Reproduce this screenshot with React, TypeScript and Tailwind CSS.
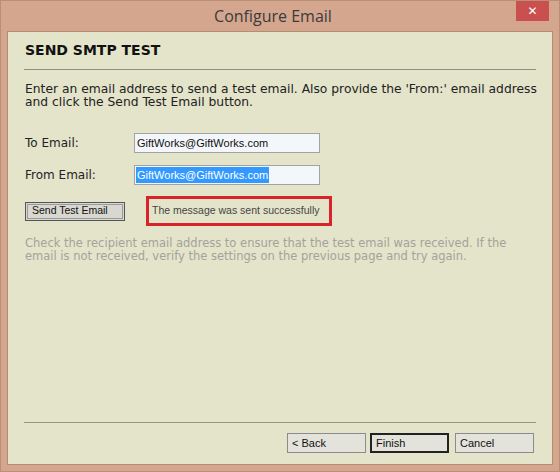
import React from 'react';

// Ventana de diálogo "Configure Email" estilo Windows 8 con asistente de prueba SMTP
const verdana = { fontFamily: '"DejaVu Sans", Verdana, sans-serif' };
const tahoma = { fontFamily: '"Liberation Sans", Tahoma, Arial, sans-serif' };

function WizButton({ label, focused = false }: { label: string; focused?: boolean }) {
  return (
    <button
      className={
        'w-[79px] h-[20px] bg-[#e3e3dc] text-left pl-[4px] text-[11px] text-[#111] leading-none ' +
        (focused ? 'border-2 border-[#222]' : 'border border-[#8c8c8c]')
      }
      style={tahoma}
    >
      {label}
    </button>
  );
}

export default function App() {
  return (
    <div className="w-[560px] h-[472px] bg-[#d4a68e] border border-[#b98f77] flex flex-col overflow-hidden">
      {/* Barra de título */}
      <div className="relative h-[30px] shrink-0 flex items-center justify-center pr-[14px]">
        <span className="text-[16px] text-[#3b3b3b]" style={{ fontFamily: '"Open Sans", "Noto Sans", sans-serif' }}>
          Configure Email
        </span>
        <div className="absolute right-[10px] top-0 w-[33px] h-[20px] bg-[#c9504f] flex items-center justify-center">
          <span className="text-white text-[12px] font-bold leading-none" style={{ fontFamily: '"DejaVu Sans", sans-serif' }}>✕</span>
        </div>
      </div>

      {/* Área de contenido */}
      <div className="flex-1 mx-[6px] mb-[6px] bg-[#e4e4ca] border border-[#b38c74] flex flex-col px-[16px]" style={verdana}>
        <h1 className="pt-[10px] pl-[1px] text-[14px] font-bold text-[#111] leading-[16px]">SEND SMTP TEST</h1>
        <div className="mt-[11px] h-px bg-[#8e8e86]" />

        <p className="mt-[13px] pl-[1px] text-[12.3px] leading-[13px] text-[#222] whitespace-nowrap">
          Enter an email address to send a test email. Also provide the 'From:' email address
          <br />
          and click the Send Test Email button.
        </p>

        <div className="mt-[24px] flex flex-col gap-[12px] pl-[1px]">
          <div className="flex items-center">
            <span className="w-[109px] text-[12px] text-[#222]">To Email:</span>
            <div
              className="w-[186px] h-[20px] bg-[#f3f6fb] border border-[#a3a3a3] flex items-center pl-[2px] text-[11px] text-[#111]"
              style={tahoma}
            >
              GiftWorks@GiftWorks.com
            </div>
          </div>
          <div className="flex items-center">
            <span className="w-[109px] text-[12px] text-[#222]">From Email:</span>
            <div
              className="w-[186px] h-[20px] bg-[#f3f6fb] border border-[#a3a3a3] flex items-center pl-[1px] text-[11px]"
              style={tahoma}
            >
              <span className="bg-[#3399ff] text-white px-[1px]">GiftWorks@GiftWorks.com</span>
            </div>
          </div>
        </div>

        <div className="mt-[11px] flex items-center pl-[1px]">
          <div className="w-[100px] h-[19px] border border-[#555] bg-[#d8d8d0] p-px">
            <div
              className="w-full h-full border border-[#9a9a9a] flex items-center pl-[4px] text-[10.5px] text-[#111]"
              style={tahoma}
            >
              Send Test Email
            </div>
          </div>
          <div
            className="ml-[21px] w-[186px] h-[30px] border-[3px] border-[#d9232b] flex items-center pl-[3px] text-[10.5px] text-[#444]"
            style={tahoma}
          >
            The message was sent successfully
          </div>
        </div>

        <p className="mt-[11px] pl-[1px] text-[11.5px] leading-[13px] text-[#a3a39a] whitespace-nowrap">
          Check the recipient email address to ensure that the test email was received. If the
          <br />
          email is not received, verify the settings on the previous page and try again.
        </p>

        <div className="flex-1" />
        <div className="h-px bg-[#8e9a86]" />
        <div className="mt-[10px] mb-[11px] flex justify-end pr-[2px]">
          <WizButton label="< Back" />
          <div className="w-[4px]" />
          <WizButton label="Finish" focused />
          <div className="w-[6px]" />
          <WizButton label="Cancel" />
        </div>
      </div>
    </div>
  );
}
